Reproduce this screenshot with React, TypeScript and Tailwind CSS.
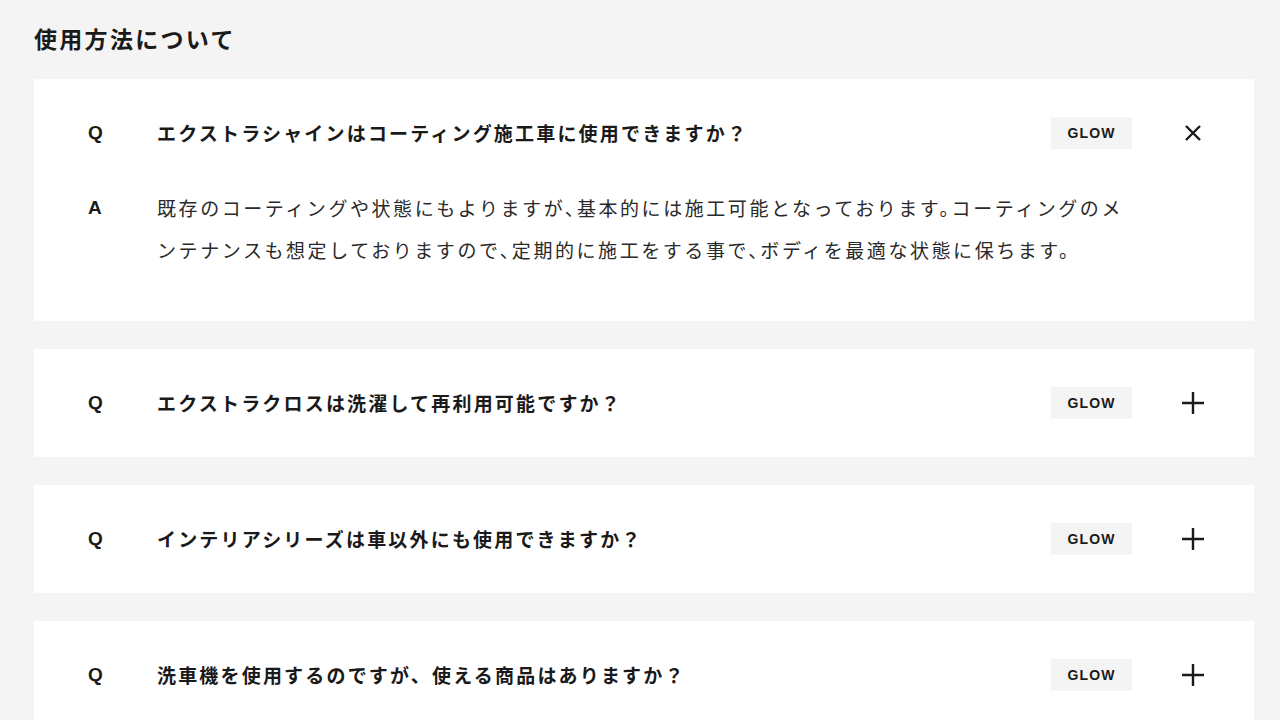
import React from "react";

const JP = '"Noto Sans CJK JP", "Noto Sans", sans-serif';
const LATIN = '"Liberation Sans", Arial, sans-serif';

type Item = { q: string; a?: string; open?: boolean };

const items: Item[] = [
  {
    q: "エクストラシャインはコーティング施工車に使用できますか？",
    a: "既存のコーティングや状態にもよりますが、基本的には施工可能となっております。コーティングのメンテナンスも想定しておりますので、定期的に施工をする事で、ボディを最適な状態に保ちます。",
    open: true,
  },
  { q: "エクストラクロスは洗濯して再利用可能ですか？" },
  { q: "インテリアシリーズは車以外にも使用できますか？" },
  { q: "洗車機を使用するのですが、使える商品はありますか？" },
];

function CloseIcon() {
  return (
    <svg width="18" height="18" viewBox="0 0 18 18" fill="none">
      <path d="M2 2L16 16M16 2L2 16" stroke="#1a1a1a" strokeWidth="2.4" />
    </svg>
  );
}

function PlusIcon() {
  return (
    <svg width="24" height="24" viewBox="0 0 24 24" fill="none">
      <path d="M12 1V23M1 12H23" stroke="#1a1a1a" strokeWidth="2.4" />
    </svg>
  );
}

function FaqCard({ item }: { item: Item }) {
  return (
    <div className="bg-white">
      <div className="flex items-center py-[38px] pl-[54px] pr-[49px]">
        <span
          className="w-[69px] shrink-0 text-[19px] font-bold text-[#1a1a1a]"
          style={{ fontFamily: LATIN }}
        >
          Q
        </span>
        <p
          className="flex-1 text-[19px] font-bold leading-8 tracking-[0.115em] text-[#1a1a1a]"
          style={{ fontFamily: JP }}
        >
          {item.q}
        </p>
        <span
          className="flex h-8 w-[81px] shrink-0 items-center justify-center bg-[#f4f4f4] text-[14px] font-bold tracking-[0.08em] text-[#1a1a1a]"
          style={{ fontFamily: LATIN }}
        >
          GLOW
        </span>
        <span className="ml-[49px] flex h-6 w-6 shrink-0 items-center justify-center">
          {item.open ? <CloseIcon /> : <PlusIcon />}
        </span>
      </div>
      {item.open && item.a && (
        <div className="flex pb-[50px] pl-[54px] pr-[114px]">
          <span
            className="w-[69px] shrink-0 text-[19px] font-bold leading-[42px] text-[#1a1a1a]"
            style={{ fontFamily: LATIN }}
          >
            A
          </span>
          {/* half-width 、。 in the body copy */}
          <p
            className="flex-1 text-[19px] leading-[42px] tracking-[0.135em] text-[#2a2a2a] [font-feature-settings:'halt']"
            style={{ fontFamily: JP }}
          >
            {item.a}
          </p>
        </div>
      )}
    </div>
  );
}

export default function App() {
  return (
    <div className="min-h-screen bg-[#f4f4f4] pl-[34px] pr-[26px] pt-[22px]">
      <h2
        className="mb-[25px] text-[23px] font-bold leading-8 tracking-[0.1em] text-[#1a1a1a]"
        style={{ fontFamily: JP }}
      >
        使用方法について
      </h2>
      <div className="flex flex-col gap-[28px]">
        {items.map((it, i) => (
          <FaqCard key={i} item={it} />
        ))}
      </div>
    </div>
  );
}
